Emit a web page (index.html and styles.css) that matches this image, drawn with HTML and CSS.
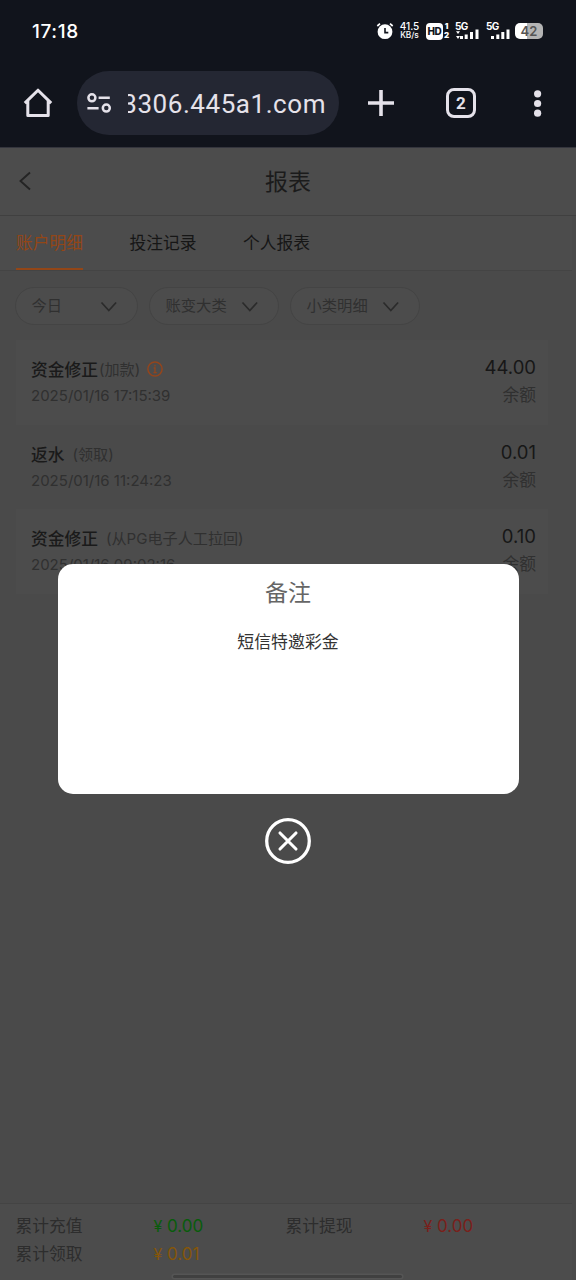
FILE: index.html
```html
<!DOCTYPE html>
<html lang="zh-CN">
<head>
<meta charset="utf-8">
<title>报表</title>
<link rel="stylesheet" href="styles.css">
</head>
<body>
<div class="screen">
  <div class="status">
    <span class="clock">17:18</span>
    <div class="indicators">
      <svg class="alarm" width="18" height="18" viewBox="0 0 18 18"><circle cx="9" cy="9.7" r="7.4" fill="#fff"/><path d="M1.3 4 4 1.6M14 1.6 16.7 4" stroke="#fff" stroke-width="1.7" fill="none"/><path d="M9 6v4.6h3.3" stroke="#11141c" stroke-width="1.6" fill="none"/></svg>
      <span class="speed"><b>41.5</b><b>KB/s</b></span>
      <span class="hd">HD</span>
      <span class="sims"><b>1</b><b>2</b></span>
      <span class="cell first"><b>5G</b><svg width="25" height="18" viewBox="0 0 25 18"><path d="M6.5 14v3M11.2 12.5V17M16.5 10v7M22 7.5V17" stroke="#fff" stroke-width="3"/><path d="M1 9.3h4L3 12zM1 14h4l-2 3z" fill="#fff"/></svg></span>
      <span class="cell second"><b>5G</b><svg width="25" height="18" viewBox="0 0 25 18"><path d="M6.5 14v3M11.8 12.5V17M16.8 10v7M22 7.5V17" stroke="#fff" stroke-width="3"/></svg></span>
      <span class="battery">42</span>
    </div>
  </div>

  <div class="browser">
    <svg class="home" width="30" height="30" viewBox="0 0 30 30"><path d="M1.8 15.1 15 2.2l13.2 12.9M4.8 13v14.6h20.4V13" fill="none" stroke="#e5e2ea" stroke-width="3" stroke-linejoin="round"/></svg>
    <div class="address">
      <svg width="26" height="22" viewBox="0 0 26 22" fill="none" stroke="#e5e2ea" stroke-width="2.5"><circle cx="5.9" cy="5.8" r="3.5"/><path d="M12.6 5.8h11.2M1.4 16.3h11.2"/><circle cx="20.3" cy="16.1" r="3.5"/></svg>
      <div class="url"><span>3306.445a1.com</span></div>
    </div>
    <svg class="plus" width="28" height="28" viewBox="0 0 28 28"><path d="M14 1v26M1 14h26" stroke="#e5e2ea" stroke-width="3.6"/></svg>
    <div class="tabcount">2</div>
    <svg class="dots" width="8" height="28" viewBox="0 0 8 28" fill="#e5e2ea"><circle cx="3.6" cy="4.8" r="3.6"/><circle cx="3.6" cy="14.5" r="3.6"/><circle cx="3.6" cy="24.2" r="3.6"/></svg>
  </div>

  <div class="page">
    <div class="titlebar">
      <svg class="back" width="14" height="20" viewBox="0 0 14 20"><path d="M12 1.5 2.5 10 12 18.5" fill="none" stroke="#242424" stroke-width="1.9"/></svg>
      <span class="title">报表</span>
    </div>
    <div class="tabs"><span class="tab active">账户明细</span><span class="tab">投注记录</span><span class="tab">个人报表</span></div>
    <div class="filters">
      <div class="pill short">今日<svg width="18" height="12" viewBox="0 0 18 12"><path d="m1.5 1.5 7.3 8 7.3-8"/></svg></div>
      <div class="pill">账变大类<svg width="18" height="12" viewBox="0 0 18 12"><path d="m1.5 1.5 7.3 8 7.3-8"/></svg></div>
      <div class="pill">小类明细<svg width="18" height="12" viewBox="0 0 18 12"><path d="m1.5 1.5 7.3 8 7.3-8"/></svg></div>
    </div>
    <div class="records">
      <div class="record light">
        <div class="info"><div class="name">资金修正<span class="note tight">(加款)</span><svg class="tip" width="16" height="16" viewBox="0 0 16 16"><circle cx="8" cy="8" r="7.1" fill="none" stroke="#93451d" stroke-width="1.5"/><path d="M8 3.8v1.6M6.7 7H8v4.7M6.4 11.7h3.4" fill="none" stroke="#93451d" stroke-width="1.3"/></svg></div><div class="date">2025/01/16 17:15:39</div></div>
        <div class="sum"><div class="amount">44.00</div><div class="kind">余额</div></div>
      </div>
      <div class="record">
        <div class="info"><div class="name">返水<span class="note">(领取)</span></div><div class="date">2025/01/16 11:24:23</div></div>
        <div class="sum"><div class="amount">0.01</div><div class="kind">余额</div></div>
      </div>
      <div class="record light">
        <div class="info"><div class="name">资金修正<span class="note">(从PG电子人工拉回)</span></div><div class="date">2025/01/16 09:02:16</div></div>
        <div class="sum"><div class="amount">0.10</div><div class="kind">余额</div></div>
      </div>
    </div>
    <div class="totals">
      <span>累计充值</span><span class="money green"><i>¥</i>0.00</span><span>累计提现</span><span class="money red"><i>¥</i>0.00</span>
      <span>累计领取</span><span class="money amber"><i>¥</i>0.01</span>
    </div>
  </div>

  <div class="overlay">
    <div class="dialog"><div class="heading">备注</div><div class="message">短信特邀彩金</div></div>
    <svg class="close" width="46" height="46" viewBox="0 0 46 46" fill="none" stroke="#fff"><circle cx="23" cy="23" r="21.3" stroke-width="3.3"/><path d="m15 15 16 16M31 15 15 31" stroke-width="3.1" stroke-linecap="round"/></svg>
  </div>
  <div class="gesture"></div>
</div>
</body>
</html>
```
FILE: styles.css
```css
* { box-sizing: border-box; }
body { margin: 0; background: #4a4a4a; font-family: Inter, "Noto Sans CJK SC", sans-serif; }
svg { display: block; flex: none; }
b, i { font-style: normal; }
.screen { position: relative; width: 576px; height: 1280px; overflow: hidden; display: flex; flex-direction: column; }

.status { height: 62px; flex: none; background: #11141c; color: #fff; display: flex; align-items: center; justify-content: space-between; padding: 0 32px; }
.clock { font-size: 19px; font-weight: 500; letter-spacing: .6px; }
.indicators { display: flex; align-items: center; height: 18px; margin-right: 1px; }
.speed { display: flex; flex-direction: column; width: 21px; margin-left: 5px; font: 600 9px/9px Inter, sans-serif; align-items: center; white-space: nowrap; }
.speed b { font-weight: 500; }
.speed b:first-child { font-size: 10px; }
.speed b:last-child { font-size: 8.3px; }
.hd { width: 17px; height: 17px; margin-left: 6px; border-radius: 4px; background: #fff; color: #11141c; font: 800 10px/17px Inter, sans-serif; text-align: center; letter-spacing: -.4px; }
.sims { width: 7px; display: flex; flex-direction: column; font: 700 8px/9px Inter, sans-serif; align-items: center; }
.cell { position: relative; width: 25px; height: 18px; }
.cell b { position: absolute; left: 0; top: -1px; font: 700 10px/10px Inter, sans-serif; letter-spacing: -.6px; }
.first { margin-left: 5px; }
.second { margin-left: 6px; }
.battery { width: 28px; height: 16px; margin: 0 0 0 4px; border-radius: 5px; background: linear-gradient(90deg, #fff 42%, #b4b4b4 42%); color: #555; font: 600 13px/16px Inter, sans-serif; text-align: center; }

.browser { height: 86px; flex: none; background: #11141c; border-bottom: 1px solid #34353d; display: flex; align-items: center; padding: 0 34px 4px 23px; }
.address { width: 262px; height: 64px; margin-left: 24px; border-radius: 32px; background: #242733; display: flex; align-items: center; padding-left: 9px; }
.url { width: 198px; height: 40px; margin-left: 16px; overflow: hidden; display: flex; justify-content: flex-end; color: #e5e2ea; font: 26px/42px Roboto, sans-serif; letter-spacing: .55px; }
.url span { flex: none; }
.plus { margin-left: 28px; }
.tabcount { width: 30px; height: 30px; margin-left: 51px; border: 3px solid #e5e2ea; border-radius: 8px; color: #e5e2ea; font: 700 17px/24px Roboto, sans-serif; text-align: center; }
.dots { margin-left: auto; }

.page { flex: 1; display: flex; flex-direction: column; background: #4a4a4a; }
.titlebar { height: 68px; flex: none; background: #4c4c4c; border-bottom: 1px solid #404040; display: flex; align-items: center; padding: 0 18px 1px; }
.title { flex: 1; padding: 2px 14px 0 0; text-align: center; font-size: 23px; line-height: 34px; color: #1b1b1b; }
.tabs { width: 572px; height: 55px; flex: none; background: #4c4c4c; border-bottom: 1px solid #444; display: flex; gap: 46.5px; padding-left: 16px; }
.tab { height: 54px; font-size: 16.75px; line-height: 55px; color: #161616; white-space: nowrap; }
.active { color: #934617; border-bottom: 2.5px solid #934617; }
.filters { display: flex; gap: 11px; padding: 16px 15px 0; }
.pill { width: 130px; height: 38px; border: 1.5px solid #444; border-radius: 19px; background: #4c4c4c; padding: 0 19px 0 15.5px; display: flex; align-items: center; justify-content: space-between; font-size: 15.3px; line-height: 34px; color: #303030; white-space: nowrap; }
.pill.short { width: 123px; }
.pill svg { fill: none; stroke: #2b2b2b; stroke-width: 1.7; margin-top: 1px; }
.records { width: 532px; margin: 15px 0 0 16px; }
.record { height: 84.5px; padding: 16px 12px 0 15px; display: flex; justify-content: space-between; }
.light { background: #4c4c4c; }
.name { height: 27px; display: flex; align-items: center; font-size: 16.75px; line-height: 28px; padding-top: 1px; font-weight: 500; color: #1a1a1a; white-space: nowrap; }
.note { margin-left: 8px; font-size: 15.1px; font-weight: 400; color: #303030; }
.note.tight { margin-left: 1px; }
.tip { margin: -3px 0 0 7px; }
.date { font-size: 15px; line-height: 26px; color: #303030; white-space: nowrap; }
.sum { text-align: right; }
.amount { font-size: 18.5px; line-height: 23px; color: #171717; }
.kind { font-size: 16.75px; line-height: 33px; color: #303030; }
.totals { height: 77px; width: 572px; margin-top: auto; flex: none; background: #4c4c4c; border-top: 1px solid #444; padding: 8px 0 0 15.5px; display: grid; grid-template-columns: 138px 132px 138px 1fr; grid-template-rows: 28px 28px; align-content: start; font-size: 16.75px; line-height: 28px; color: #2d2d2d; }
.money { font-size: 17px; }
.money i { display: inline-block; width: 13.5px; font-size: 16px; }
.green { color: #085c0b; }
.red { color: #7a201b; }
.amber { color: #855609; }

.overlay { position: absolute; left: 0; top: 564px; width: 576px; display: flex; flex-direction: column; align-items: center; }
.dialog { width: 461px; height: 230px; border-radius: 15px; background: #fff; text-align: center; padding-top: 11px; }
.heading { font-size: 23px; line-height: 36px; color: #666; }
.message { margin-top: 18px; font-size: 16.9px; line-height: 26px; color: #333; }
.close { margin-top: 24px; }
.gesture { position: absolute; left: 173px; top: 1275px; width: 229px; height: 3px; border-radius: 2px; background: #404040; box-shadow: 0 0 0 1.5px #555; }
```
